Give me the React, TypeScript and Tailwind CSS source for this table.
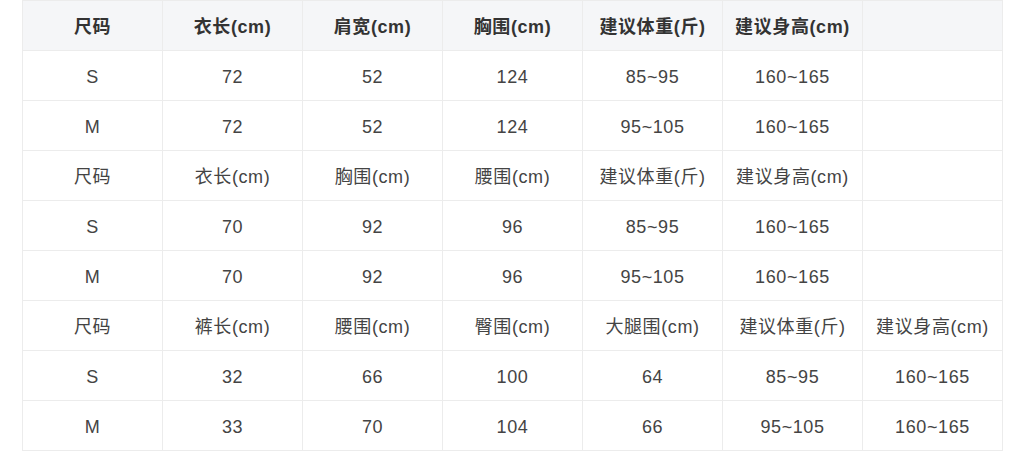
const rows: { cells: string[]; head?: boolean }[] = [
  { cells: ["尺码", "衣长(cm)", "肩宽(cm)", "胸围(cm)", "建议体重(斤)", "建议身高(cm)", ""], head: true },
  { cells: ["S", "72", "52", "124", "85~95", "160~165", ""] },
  { cells: ["M", "72", "52", "124", "95~105", "160~165", ""] },
  { cells: ["尺码", "衣长(cm)", "胸围(cm)", "腰围(cm)", "建议体重(斤)", "建议身高(cm)", ""] },
  { cells: ["S", "70", "92", "96", "85~95", "160~165", ""] },
  { cells: ["M", "70", "92", "96", "95~105", "160~165", ""] },
  { cells: ["尺码", "裤长(cm)", "腰围(cm)", "臀围(cm)", "大腿围(cm)", "建议体重(斤)", "建议身高(cm)"] },
  { cells: ["S", "32", "66", "100", "64", "85~95", "160~165"] },
  { cells: ["M", "33", "70", "104", "66", "95~105", "160~165"] },
];

export default function App() {
  return (
    <div
      className="w-[1024px] h-[451px] bg-white overflow-hidden pl-[22px]"
      style={{ fontFamily: '"Liberation Sans", "Noto Sans CJK SC", sans-serif' }}
    >
      <table className="border-collapse table-fixed w-[981px]">
        <tbody>
          {rows.map((row, i) => (
            <tr key={i} className={row.head ? "bg-[#f5f6f8]" : "bg-white"}>
              {row.cells.map((c, j) => (
                <td
                  key={j}
                  className={
                    "w-[140px] h-[50px] p-0 pt-[3px] border border-[#ececec] text-center text-[18px] tracking-[0.6px] " +
                    (row.head ? "font-bold text-[#333333]" : "text-[#444444]")
                  }
                >
                  {c}
                </td>
              ))}
            </tr>
          ))}
        </tbody>
      </table>
    </div>
  );
}
